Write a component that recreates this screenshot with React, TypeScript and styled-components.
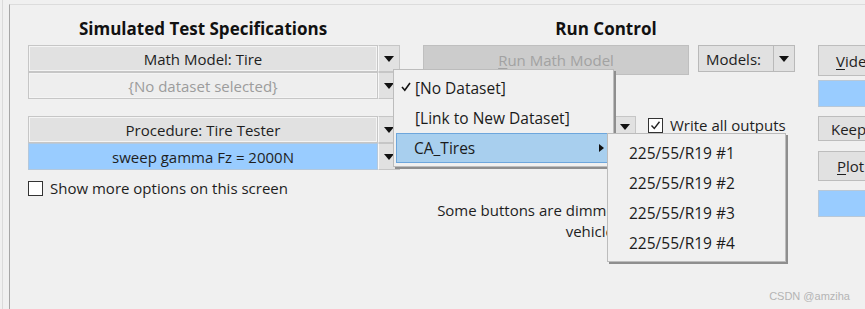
import React from "react";
import styled, { createGlobalStyle } from "styled-components";

type Tone = "button" | "field" | "selected";

const GlobalStyle = createGlobalStyle`
  html, body {
    margin: 0;
    padding: 0;
    background: #f0f0f0;
  }
  body {
    font-family: "Open Sans", "Noto Sans", sans-serif;
    color: #1e1e1e;
  }
`;

const Page = styled.div`
  position: relative;
  width: 865px;
  height: 309px;
  overflow: hidden;
  background: #f0f0f0;
  padding-left: 2px;
  box-sizing: border-box;
`;

const OuterRule = styled.div`
  height: 100%;
  border-left: 1px solid #dadada;
  padding: 4px 0 0 6px;
  box-sizing: border-box;
`;

const Frame = styled.div`
  height: 100%;
  display: flex;
  gap: 23px;
  padding-left: 18px;
  border-left: 1px solid #a6a6a6;
  border-top: 1px solid #dcdcdc;
  box-sizing: border-box;
`;

const Column = styled.div<{ $width: number }>`
  width: ${(p) => p.$width}px;
  flex-shrink: 0;
  display: flex;
  flex-direction: column;
`;

const Title = styled.div<{ $shift: number }>`
  padding-top: 14px;
  padding-right: ${(p) => p.$shift}px;
  margin-bottom: 6px;
  line-height: 20px;
  font-size: 17px;
  font-weight: 700;
  text-align: center;
  white-space: nowrap;
  color: #111;
`;

const Group = styled.div<{ $gap?: number }>`
  display: flex;
  flex-direction: column;
  margin-top: ${(p) => p.$gap ?? 0}px;
`;

const Row = styled.div<{ $height: number }>`
  display: flex;
  height: ${(p) => p.$height}px;
`;

const toneBg: Record<Tone, string> = {
  button: "#e1e1e1",
  field: "#eeeeee",
  selected: "#99ccff",
};

const ComboMain = styled.div<{ $tone: Tone }>`
  flex: 1;
  display: flex;
  align-items: center;
  justify-content: center;
  font-size: 15px;
  background: ${(p) => toneBg[p.$tone]};
  color: ${(p) => (p.$tone === "field" ? "#9c9c9c" : "#1e1e1e")};
  border: 1px solid ${(p) => (p.$tone === "selected" ? "#b4c8dc" : "#c6c6c6")};
  box-shadow: inset 0 0 0 1px ${(p) => (p.$tone === "selected" ? "#99ccff" : "#f4f4f4")};
`;

const ComboArrow = styled.div`
  width: 20px;
  display: flex;
  align-items: center;
  justify-content: center;
  background: #e1e1e1;
  border: 1px solid #c6c6c6;
  border-left: 1px solid #f8f8f8;
`;

const CheckRow = styled.label<{ $top: number }>`
  display: flex;
  align-items: center;
  gap: 7px;
  margin-top: ${(p) => p.$top}px;
  font-size: 15px;
  line-height: 18px;
  white-space: nowrap;
`;

const Box = styled.span`
  width: 13px;
  height: 13px;
  flex-shrink: 0;
  border: 1px solid #333;
  background: #fff;
  display: flex;
  align-items: center;
  justify-content: center;
`;

const RunRow = styled.div`
  display: flex;
  gap: 9px;
  align-items: flex-start;
`;

const RunButton = styled.div`
  width: 266px;
  height: 30px;
  box-sizing: border-box;
  background: #cccccc;
  border: 1px solid #bfbfbf;
  color: #a2a2a2;
  font-size: 15px;
  display: flex;
  align-items: center;
  justify-content: center;
`;

const ModelsCombo = styled.div`
  width: 97px;
  height: 27px;
  box-sizing: border-box;
  display: flex;
  background: #e1e1e1;
  border: 1px solid #b9b9b9;
  font-size: 15px;
`;

const ModelsLabel = styled.div`
  flex: 1;
  display: flex;
  align-items: center;
  padding-left: 7px;
  border-right: 1px solid #b9b9b9;
`;

const ModelsArrow = styled.div`
  width: 20px;
  display: flex;
  align-items: center;
  justify-content: center;
`;

const OutputsRow = styled.div`
  display: flex;
  align-items: flex-start;
  margin-top: 41px;
  gap: 12px;
`;

const HiddenCombo = styled.div`
  width: 213px;
  height: 22px;
  display: flex;
  justify-content: flex-end;
`;

const SmallArrow = styled.div`
  width: 23px;
  height: 22px;
  box-sizing: border-box;
  display: flex;
  align-items: center;
  justify-content: center;
  background: #e1e1e1;
  border: 1px solid #c6c6c6;
`;

const Note = styled.div`
  margin-top: 62px;
  text-align: center;
  font-size: 15px;
  line-height: 21px;
  white-space: nowrap;
`;

const SideButton = styled.div<{ $h: number; $top: number; $pad?: number; $blue?: boolean }>`
  height: ${(p) => p.$h}px;
  margin-top: ${(p) => p.$top}px;
  box-sizing: border-box;
  background: ${(p) => (p.$blue ? "#99ccff" : "#e1e1e1")};
  border: 1px solid ${(p) => (p.$blue ? "#b8c8d8" : "#bdbdbd")};
  font-size: 15px;
  display: flex;
  align-items: center;
  white-space: nowrap;
  overflow: hidden;
  padding-left: ${(p) => p.$pad ?? 0}px;
`;

const Accel = styled.span`
  text-decoration: underline;
  text-underline-offset: 2px;
`;

const Menu = styled.div<{ $left: number; $top: number; $w: number; $h: number; $pad: number }>`
  position: absolute;
  left: ${(p) => p.$left}px;
  top: ${(p) => p.$top}px;
  width: ${(p) => p.$w}px;
  height: ${(p) => p.$h}px;
  box-sizing: border-box;
  padding: ${(p) => p.$pad}px 2px 0 2px;
  background: #f0f0f0;
  border: 1px solid #bcbcbc;
  box-shadow: 2px 2px 0 #8e8e8e;
  font-size: 15.5px;
  color: #1b1b1b;
`;

const MenuItem = styled.div<{ $active?: boolean; $indent: number }>`
  position: relative;
  height: 30px;
  box-sizing: border-box;
  display: flex;
  align-items: center;
  white-space: nowrap;
  padding-left: ${(p) => p.$indent}px;
  background: ${(p) => (p.$active ? "#a8cfee" : "transparent")};
  border: 1px solid ${(p) => (p.$active ? "#6da6dc" : "transparent")};
`;

const Check = styled.svg`
  position: absolute;
  left: 4px;
  top: 8px;
`;

const SubArrow = styled.svg`
  position: absolute;
  right: 6px;
  top: 10px;
`;

const Watermark = styled.div`
  position: absolute;
  right: 15px;
  bottom: 7px;
  font-family: "Liberation Sans", Arial, sans-serif;
  font-size: 11px;
  color: #b4b4b4;
`;

const DownTri = () => (
  <svg width="10" height="6" viewBox="0 0 10 6">
    <polygon points="0,0 10,0 5,6" fill="#111" />
  </svg>
);

const Combo = ({ label, tone }: { label: string; tone: Tone }) => (
  <Row $height={27}>
    <ComboMain $tone={tone}>{label}</ComboMain>
    <ComboArrow>
      <DownTri />
    </ComboArrow>
  </Row>
);

const tires = ["225/55/R19 #1", "225/55/R19 #2", "225/55/R19 #3", "225/55/R19 #4"];

export default function App() {
  return (
    <>
      <GlobalStyle />
      <Page>
        <OuterRule>
          <Frame>
            <Column $width={372}>
              <Title $shift={22}>Simulated Test Specifications</Title>
              <Group>
                <Combo label="Math Model: Tire" tone="button" />
                <Combo label="{No dataset selected}" tone="field" />
              </Group>
              <Group $gap={17}>
                <Combo label="Procedure: Tire Tester" tone="button" />
                <Combo label="sweep gamma Fz = 2000N" tone="selected" />
              </Group>
              <CheckRow $top={9}>
                <Box />
                Show more options on this screen
              </CheckRow>
            </Column>

            <Column $width={372}>
              <Title $shift={6}>Run Control</Title>
              <RunRow>
                <RunButton>
                  <span>
                    <Accel>R</Accel>un Math Model
                  </span>
                </RunButton>
                <ModelsCombo>
                  <ModelsLabel>Models:</ModelsLabel>
                  <ModelsArrow>
                    <DownTri />
                  </ModelsArrow>
                </ModelsCombo>
              </RunRow>
              <OutputsRow>
                <HiddenCombo>
                  <SmallArrow>
                    <DownTri />
                  </SmallArrow>
                </HiddenCombo>
                <CheckRow $top={0}>
                  <Box>
                    <svg width="11" height="11" viewBox="0 0 11 11">
                      <path d="M1.5 5.5 L4.3 8.5 L9.5 1.8" stroke="#222" strokeWidth="1.4" fill="none" />
                    </svg>
                  </Box>
                  Write all outputs
                </CheckRow>
              </OutputsRow>
              <Note>
                Some buttons are dimmed if they do not apply to
                <br />
                vehicle type.
              </Note>
            </Column>

            <Column $width={120}>
              <SideButton $h={31} $top={40} $pad={17}>
                <span>
                  <Accel>V</Accel>ideo
                </span>
              </SideButton>
              <SideButton $h={27} $top={4} $blue />
              <SideButton $h={25} $top={9} $pad={12}>
                Keep
              </SideButton>
              <SideButton $h={30} $top={10} $pad={18}>
                <span>
                  <Accel>P</Accel>lot
                </span>
              </SideButton>
              <SideButton $h={27} $top={9} $blue />
            </Column>
          </Frame>
        </OuterRule>

        <Menu $left={393} $top={69} $w={221} $h={98} $pad={3}>
          <MenuItem $indent={18}>
            <Check width="10" height="10" viewBox="0 0 10 10">
              <path d="M1 5 L3.8 8.2 L9 1" stroke="#111" strokeWidth="1.6" fill="none" />
            </Check>
            [No Dataset]
          </MenuItem>
          <MenuItem $indent={18}>[Link to New Dataset]</MenuItem>
          <MenuItem $indent={17} $active>
            CA_Tires
            <SubArrow width="5" height="8" viewBox="0 0 5 8">
              <polygon points="0,0 5,4 0,8" fill="#111" />
            </SubArrow>
          </MenuItem>
        </Menu>

        <Menu $left={607} $top={133} $w={179} $h={129} $pad={4}>
          {tires.map((t) => (
            <MenuItem key={t} $indent={18}>
              {t}
            </MenuItem>
          ))}
        </Menu>

        <Watermark>CSDN @amziha</Watermark>
      </Page>
    </>
  );
}
